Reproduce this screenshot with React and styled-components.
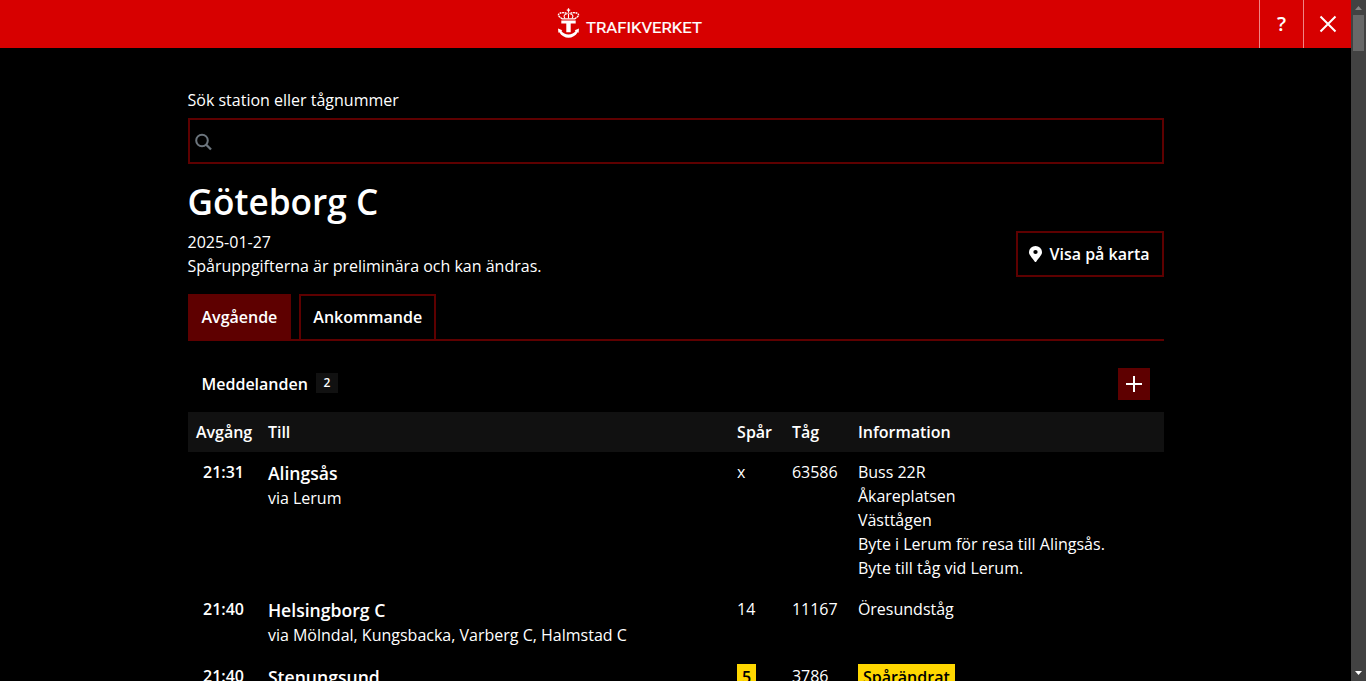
import React from "react";
import styled, { createGlobalStyle } from "styled-components";

const GlobalStyle = createGlobalStyle`
  *, *::before, *::after { box-sizing: border-box; }
  html, body { margin: 0; height: 100%; overflow: hidden; background: #000; }
  #root { height: 100%; }
  body {
    color: #fff;
    font-family: "Open Sans", "Liberation Sans", sans-serif;
    font-size: 16px;
    line-height: 24px;
  }
  button, input { font: inherit; color: inherit; }
`;

const Window = styled.div`
  display: flex;
  height: 681px;
  width: 1366px;
  overflow: hidden;
`;

const Page = styled.div`
  flex: 1;
  min-width: 0;
  overflow: hidden;
`;

const TopBar = styled.header`
  display: grid;
  grid-template-columns: 92px 1fr 92px;
  height: 48px;
  background: #d70000;
`;

const Brand = styled.div`
  grid-column: 2;
  display: flex;
  justify-content: center;
  padding-right: 87px;
`;

const TopActions = styled.div`
  display: flex;
`;

const TopButton = styled.button`
  display: flex;
  align-items: center;
  justify-content: center;
  width: ${(p) => p.$width}px;
  height: 48px;
  padding: 0;
  border: 0;
  border-left: 1px solid #f08585;
  background: none;
  font-size: 20px;
  font-weight: 600;
`;

const Content = styled.main`
  width: 976px;
  margin: 0 auto;
  padding-top: 40px;
`;

const SearchLabel = styled.label`
  display: block;
`;

const SearchField = styled.div`
  display: flex;
  align-items: center;
  height: 46px;
  margin-top: 6px;
  padding: 2px 0 0 5px;
  border: 2px solid #5e0000;
`;

const SearchInput = styled.input`
  flex: 1;
  height: 100%;
  border: 0;
  outline: 0;
  background: none;
`;

const StationName = styled.h1`
  margin: 12px 0 4px;
  font-size: 35.2px;
  font-weight: 600;
  line-height: 50px;
`;

const StationInfo = styled.div`
  display: flex;
  align-items: flex-start;
  justify-content: space-between;
`;

const InfoText = styled.p`
  margin: 0;
`;

const MapButton = styled.button`
  display: flex;
  align-items: center;
  gap: 7px;
  height: 46px;
  margin-top: 1px;
  padding: 0 12px 0 11px;
  border: 2px solid #5e0000;
  background: none;
  font-weight: 600;
`;

const Tabs = styled.div`
  display: flex;
  gap: 8px;
  height: 47px;
  margin-top: 16px;
  border-bottom: 2px solid #5e0000;
`;

const Tab = styled.button`
  height: 45px;
  padding: 0 12px 1px;
  border: 2px solid #5e0000;
  border-bottom: 0;
  background: ${(p) => (p.$active ? "#5e0000" : "#000")};
  font-weight: 600;
`;

const Messages = styled.section`
  display: flex;
  align-items: center;
  height: 32px;
  margin: 27px 0 12px;
  padding: 0 14px;
`;

const MessagesTitle = styled.h2`
  margin: 0;
  font-size: 16px;
  font-weight: 600;
`;

const Count = styled.span`
  width: 22px;
  height: 20px;
  margin: -2px 0 0 8px;
  background: #111;
  font-size: 12px;
  font-weight: 600;
  line-height: 20px;
  text-align: center;
`;

const ExpandButton = styled.button`
  display: flex;
  align-items: center;
  justify-content: center;
  width: 32px;
  height: 32px;
  margin-left: auto;
  padding: 0;
  border: 0;
  background: #5e0000;
`;

const Row = styled.div`
  display: grid;
  grid-template-columns: 72px 469.2px 54.8px 66px 1fr;
  border-bottom: 1px solid #000;
`;

const HeadRow = styled(Row)`
  border-bottom: 0;
  background: #111;
  font-weight: 600;
`;

const Cell = styled.div`
  padding: 8px 7.6px 8px 8.4px;
`;

const TimeCell = styled(Cell)`
  padding-right: 15.5px;
  font-weight: 600;
  text-align: right;
`;

const Destination = styled.div`
  font-size: 17.6px;
  font-weight: 600;
  line-height: 26.4px;
`;

const Changed = styled.span`
  display: inline-block;
  padding: 1px 5px 0;
  background: #ffd700;
  color: #000;
  font-weight: 600;
`;

const ScrollTrack = styled.div`
  display: flex;
  flex-direction: column;
  align-items: center;
  width: 15px;
  height: 681px;
  background: #424242;
`;

const ScrollThumb = styled.div`
  width: 11px;
  height: 36px;
  margin-bottom: auto;
  background: #686868;
`;

const Logo = () => (
  <svg width="150" height="48" viewBox="0 0 150 48" fill="#fff">
    <g fill="none" stroke="#fff" strokeWidth="1.4">
      <path d="M11.500 8.300v4.500M9.800 10.200h3.400" strokeWidth="1.200" />
      <path d="M5.200 18.800C2.500 17 1 15.800 1.600 14.300 2.400 12.600 7.500 12 10.500 13.600M17.800 18.800c2.700-1.800 4.200-3 3.600-4.500-.8-1.700-5.900-2.300-8.900-.7" strokeDasharray="1.900 .6" />
      <path d="M8 18.500C6 16 7.500 14.200 10 13.800M15 18.500c2-2.500.5-4.300-2-4.700M11.500 13.500v5" strokeWidth="1.100" />
    </g>
    <path d="M5 18.300h13v1.200H5zM4.300 20.600h14.400v3h-5v8.600H9.300v-8.600h-5z" />
    <path d="M1 28.500l4.300 1.700-.9.900c3 4.500 11.200 4.500 14.200 0l-.9-.9 4.300-1.700-.4 4.300-.9-.6c-4.200 7.300-14.200 7.300-18.400 0l-.9.600z" />
    <text x="29" y="32.700" textLength="116" lengthAdjust="spacingAndGlyphs" fontFamily="Roboto, sans-serif" fontSize="15.500" fontWeight="400" stroke="#fff" strokeWidth="0.2">
      TRAFIKVERKET
    </text>
  </svg>
);

const departures = [
  {
    time: "21:31",
    to: "Alingsås",
    via: "via Lerum",
    track: "x",
    train: "63586",
    info: ["Buss 22R", "Åkareplatsen", "Västtågen", "Byte i Lerum för resa till Alingsås.", "Byte till tåg vid Lerum."],
  },
  {
    time: "21:40",
    to: "Helsingborg C",
    via: "via Mölndal, Kungsbacka, Varberg C, Halmstad C",
    track: "14",
    train: "11167",
    info: ["Öresundståg"],
  },
  { time: "21:40", to: "Stenungsund", track: "5", train: "3786", info: ["Spårändrat"], changed: true },
];

export default function App() {
  return (
    <Window>
      <GlobalStyle />
      <Page>
        <TopBar>
          <Brand>
            <Logo />
          </Brand>
          <TopActions>
            <TopButton $width={44}>?</TopButton>
            <TopButton $width={48}>
              <svg width="18" height="18" viewBox="0 0 18 18" stroke="#fff" strokeWidth="2">
                <path d="M1.500 1.500l15 15M16.500 1.500l-15 15" />
              </svg>
            </TopButton>
          </TopActions>
        </TopBar>
        <Content>
          <SearchLabel htmlFor="station">Sök station eller tågnummer</SearchLabel>
          <SearchField>
            <svg width="18" height="18" viewBox="0 0 18 18" fill="none" stroke="#6c757d" strokeWidth="2">
              <circle cx="7" cy="7.500" r="5.800" />
              <path d="M11 11.500l5 5" strokeWidth="2.300" />
            </svg>
            <SearchInput id="station" />
          </SearchField>
          <StationName>Göteborg C</StationName>
          <StationInfo>
            <div>
              <InfoText>2025-01-27</InfoText>
              <InfoText>Spåruppgifterna är preliminära och kan ändras.</InfoText>
            </div>
            <MapButton>
              <svg width="13" height="16" viewBox="0 0 384 512" preserveAspectRatio="none" fill="#fff">
                <path d="M172 502C27 291 0 270 0 192a192 192 0 0 1 384 0c0 78-27 99-172 310a24 24 0 0 1-40 0zM192 256a64 64 0 1 0 0-128 64 64 0 0 0 0 128z" />
              </svg>
              Visa på karta
            </MapButton>
          </StationInfo>
          <Tabs>
            <Tab $active>Avgående</Tab>
            <Tab>Ankommande</Tab>
          </Tabs>
          <Messages>
            <MessagesTitle>Meddelanden</MessagesTitle>
            <Count>2</Count>
            <ExpandButton>
              <svg width="16" height="16" viewBox="0 0 16 16" stroke="#fff" strokeWidth="2">
                <path d="M8 0v16M0 8h16" />
              </svg>
            </ExpandButton>
          </Messages>
          <HeadRow>
            <Cell>Avgång</Cell>
            <Cell>Till</Cell>
            <Cell>Spår</Cell>
            <Cell>Tåg</Cell>
            <Cell>Information</Cell>
          </HeadRow>
          {departures.map((d) => (
            <Row key={d.train}>
              <TimeCell>{d.time}</TimeCell>
              <Cell>
                <Destination>{d.to}</Destination>
                {d.via}
              </Cell>
              <Cell>{d.changed ? <Changed>{d.track}</Changed> : d.track}</Cell>
              <Cell>{d.train}</Cell>
              <Cell>
                {d.info.map((line) => (
                  <div key={line}>{d.changed ? <Changed>{line}</Changed> : line}</div>
                ))}
              </Cell>
            </Row>
          ))}
        </Content>
      </Page>
      <ScrollTrack>
        <svg width="15" height="15" viewBox="0 0 15 15" fill="#868686">
          <path d="M4 10h7L7.500 6z" />
        </svg>
        <ScrollThumb />
        <svg width="15" height="15" viewBox="0 0 15 15" fill="#fff">
          <path d="M4 5h7L7.500 9z" />
        </svg>
      </ScrollTrack>
    </Window>
  );
}
